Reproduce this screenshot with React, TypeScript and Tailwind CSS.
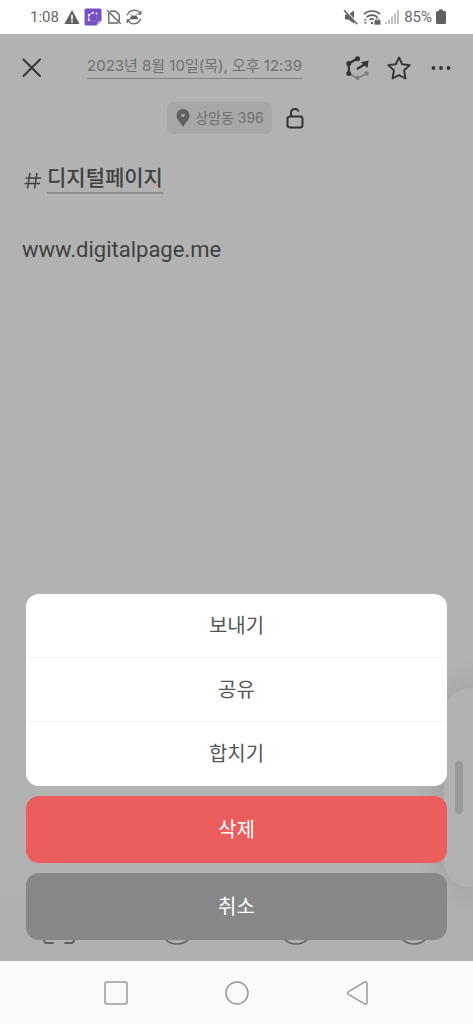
import { useState } from "react";

const actions = ["보내기", "공유", "합치기"];

function StatusBar() {
  return (
    <div className="flex h-[34px] items-center justify-between bg-white pl-[30px] pr-[27px] text-[#666]">
      <div className="flex items-center gap-1">
        <span className="text-[15px] leading-5">1:08</span>
        <svg className="ml-px h-4 w-4" viewBox="0 0 16 16">
          <path d="M8 1 15.6 15H.4z" fill="#606060" />
          <path d="M8 5.8v4.6M8 11.6v1.8" stroke="#fff" strokeWidth="1.7" />
        </svg>
        <svg className="h-[18px] w-[18px]" viewBox="0 0 18 18">
          <path d="M2 .5h14q1.5 0 1.5 1.5v10.5l-5 5H2Q.5 17.5 .5 16V2Q.5 .5 2 .5z" fill="#7651c4" />
          <path d="m17.5 12.5-5 5 .8-3.500q.2-.8 1-.9z" fill="#a98be0" />
          <path d="M9 4.700 4.800 7v5" fill="none" stroke="#fff" strokeWidth=".8" />
          <path d="m4.800 12 3.800 2 4-2.200V8" fill="none" stroke="#9173d4" strokeWidth=".7" />
          <circle cx="9" cy="4.700" r="1" fill="#fff" />
          <circle cx="4.800" cy="7" r="1.100" fill="#fff" />
          <circle cx="4.800" cy="12" r="1.100" fill="#fff" />
          <circle cx="12.500" cy="5.500" r=".9" fill="#fff" />
        </svg>
        <svg className="h-4 w-4" viewBox="0 0 16 16" fill="none" stroke="#666" strokeWidth="1.400">
          <path d="M4 2.200h5.500l3.700 3.600V13M2.800 4v10h9.400M1.200 1.200l13.500 13.500" />
        </svg>
        <svg className="h-4 w-4" viewBox="0 0 16 16" fill="none" stroke="#666" strokeWidth="1.300">
          <path d="M1.300 6.200a7 7 0 0 1 12.800-1.400M14.700 9.800A7 7 0 0 1 1.900 11.200M14.700 2v3.200h-3M1.300 14v-3.200h3" />
          <path d="M4 10.200a4 3.700 0 0 1 8 0z" fill="#606060" stroke="none" />
          <path d="m5 5.200 1.300 1.800M11 5.200 9.700 7" strokeWidth=".9" />
        </svg>
      </div>
      <div className="flex items-center gap-1">
        <svg className="h-4 w-4" viewBox="0 0 16 16">
          <path d="M2 5.500h3.300L11 1.500v13l-5.700-4H2z" fill="#606060" />
          <path d="m1.500 .5 13.500 15" stroke="#fff" strokeWidth="2" />
          <path d="m1 1.200 13.300 14" stroke="#606060" strokeWidth="1.500" />
        </svg>
        <svg className="h-4 w-[18px]" viewBox="0 0 18 16" fill="none" stroke="#606060" strokeWidth="1.600">
          <path d="M.8 5.200a12 12 0 0 1 16.400 0M3.600 8.200a8 8 0 0 1 10.800 0M6.300 11a4.500 4.500 0 0 1 4.500-.8" />
          <circle cx="9" cy="14" r="1.300" fill="#606060" stroke="none" />
          <path d="m.8 11.600 1.500-2 1.500 2zM.8 13l1.500 2 1.500-2z" fill="#606060" stroke="none" />
          <path d="M11.500 11.200h6v4.500h-6z" fill="#606060" stroke="none" />
          <path d="M13 11.500v-1a1.500 1.500 0 0 1 3 0v1" strokeWidth="1" />
        </svg>
        <svg className="h-4 w-[15px]" viewBox="0 0 15 16" fill="#c2c2c2">
          <path d="M0 13h2v2H0zM3 10.500h2V15H3zM6 7.500h2V15H6zM9 4.500h2V15H9zM12 1h2v14h-2z" />
        </svg>
        <span className="text-[15px] leading-5">85%</span>
        <svg className="h-4 w-[10px]" viewBox="0 0 10 16" fill="#606060">
          <path d="M3 .5h4v1.500h1.500Q10 2 10 3.500v10Q10 15 8.500 15h-7Q0 15 0 13.500v-10Q0 2 1.500 2H3z" />
        </svg>
      </div>
    </div>
  );
}

function NoteHeader() {
  return (
    <header>
      <div className="flex h-[68px] items-center justify-between px-5">
        <button aria-label="닫기">
          <svg className="h-6 w-6" viewBox="0 0 24 24" fill="none" stroke="#333" strokeWidth="2" strokeLinecap="round">
            <path d="m3.500 3.500 16.500 16.500M20 3.500 3.500 20" />
          </svg>
        </button>
        <button className="mb-1 border-b border-[#858585] font-['Inter','Noto_Sans_CJK_KR',sans-serif] text-[15px] leading-6 text-[#707070]">
          2023년 8월 10일(목), 오후 12:39
        </button>
        <div className="flex items-center gap-[18px]">
          <button aria-label="연결">
            <svg className="h-6 w-6" viewBox="0 0 24 24" fill="none">
              <path d="m3.800 17.500 8.700 5 9-5" stroke="#808080" strokeWidth="1.800" />
              <circle cx="12.500" cy="21.700" r="2.300" fill="#808080" />
              <circle cx="21.500" cy="17.500" r="2.300" fill="#808080" />
              <path d="M12.500 2.500 3.800 7.500v10M12 13l8-4.700" stroke="#333" strokeWidth="2.200" />
              <path d="m15.800 6.300 7.800-1.800-1.200 7.500z" fill="#333" />
              <circle cx="12.500" cy="2.700" r="2.500" fill="#333" />
              <circle cx="3.800" cy="7.500" r="2.500" fill="#333" />
              <circle cx="3.800" cy="17.500" r="2.500" fill="#333" />
            </svg>
          </button>
          <button aria-label="즐겨찾기">
            <svg className="h-6 w-6" viewBox="0 0 24 24" fill="none" stroke="#333" strokeWidth="1.900" strokeLinejoin="round">
              <path d="m12 1.500 3.100 6.700 7.700 .9-5.700 5.100 1.400 8.300-6.500-3.300-6.500 3.300 1.400-8.300-5.700-5.100 7.700-.9z" />
            </svg>
          </button>
          <button aria-label="더보기">
            <svg className="h-6 w-6" viewBox="0 0 24 24" fill="#333">
              <circle cx="4.500" cy="12" r="1.900" />
              <circle cx="12" cy="12" r="1.900" />
              <circle cx="19.500" cy="12" r="1.900" />
            </svg>
          </button>
        </div>
      </div>
      <div className="flex items-center justify-center gap-3">
        <button className="flex h-8 items-center gap-1 rounded-md bg-[#a7a7a7] px-2 font-['Inter','Noto_Sans_CJK_KR',sans-serif] text-sm text-[#707070]">
          <svg className="h-5 w-4" viewBox="0 0 16 20">
            <path d="M8 1a6.600 6.600 0 0 0-6.600 6.600C1.400 12 5.500 14 8 19c2.500-5 6.600-7 6.600-11.400A6.600 6.600 0 0 0 8 1z" fill="#606060" />
            <circle cx="8" cy="7.500" r="1.800" fill="#a7a7a7" />
          </svg>
          상암동 396
        </button>
        <button aria-label="잠금">
          <svg className="h-[22px] w-[22px]" viewBox="0 0 22 22" fill="none" stroke="#333" strokeWidth="2" strokeLinecap="round">
            <rect x="3.500" y="9.500" width="15" height="11" rx="2.500" />
            <path d="M7 9V5.500A3.500 3.500 0 0 1 10.500 2h1a3 3 0 0 1 2.700 1.800" />
          </svg>
        </button>
      </div>
    </header>
  );
}

function ToolBar() {
  return (
    <div className="flex h-[66px] items-start justify-between bg-[#b0b0b0] px-[41px] pt-3.5">
      <button aria-label="스캔">
        <svg className="h-9 w-9" viewBox="0 0 36 36" fill="none" stroke="#606060" strokeWidth="1.800" strokeLinecap="round">
          <path d="M12 3H6Q3 3 3 6v6M24 3h6q3 0 3 3v6M12 34H6q-3 0-3-3v-6M24 34h6q3 0 3-3v-6" />
        </svg>
      </button>
      {["음성", "사진", "추가"].map((label) => (
        <button key={label} aria-label={label}>
          <svg className="h-9 w-9" viewBox="0 0 36 36" fill="none" stroke="#606060" strokeWidth="1.600">
            <circle cx="18" cy="18" r="17" />
          </svg>
        </button>
      ))}
    </div>
  );
}

function ActionSheet({ onClose }: { onClose: () => void }) {
  return (
    <div className="absolute inset-x-0 bottom-0 flex flex-col gap-2.5 px-[26px] pb-[21px] text-xl">
      <div className="divide-y divide-[#f5f5f5] overflow-hidden rounded-[13px] bg-white text-[#555]">
        {actions.map((label) => (
          <button key={label} className="block h-16 w-full">
            {label}
          </button>
        ))}
      </div>
      <button className="h-[67px] rounded-[13px] bg-[#ec5d5d] text-white">삭제</button>
      <button className="h-[67px] rounded-[13px] bg-[#878787] text-white" onClick={onClose}>
        취소
      </button>
    </div>
  );
}

function NavBar() {
  return (
    <nav className="flex h-[63px] items-center justify-center gap-[97px] bg-[#fafafa]">
      <button aria-label="최근 앱">
        <svg className="h-6 w-6" viewBox="0 0 24 24" fill="none" stroke="#999" strokeWidth="1.500">
          <rect x="1" y="1" width="22" height="22" rx="2" />
        </svg>
      </button>
      <button aria-label="홈">
        <svg className="h-6 w-6" viewBox="0 0 24 24" fill="none" stroke="#999" strokeWidth="1.500">
          <circle cx="12" cy="12" r="11" />
        </svg>
      </button>
      <button aria-label="뒤로">
        <svg className="h-6 w-6" viewBox="0 0 24 24" fill="none" stroke="#999" strokeWidth="1.500">
          <path d="M18.500 1.200 2.500 10.600q-2 1.400 0 2.800l16 9.400q2.500 .9 2.500-1.600V2.800q0-2.500-2.500-1.600z" />
        </svg>
      </button>
    </nav>
  );
}

export default function App() {
  const [sheetOpen, setSheetOpen] = useState(true);

  return (
    <div className="flex min-h-screen flex-col font-['Roboto','Noto_Sans_CJK_KR',sans-serif]">
      <StatusBar />
      <main className="relative flex flex-1 flex-col overflow-hidden bg-[#b2b2b2]">
        <NoteHeader />
        <div className="flex-1 px-[22px] pt-[30px] text-[#404040]">
          <h1 className="flex items-center gap-[5px] text-[21px] leading-8">
            <svg className="mt-1 h-5 w-5" viewBox="0 0 20 20" fill="none" stroke="#404040" strokeWidth="1.500">
              <path d="M8 2 5.500 17.500M15 2l-2.500 15.500M3.500 7h15.500M2.500 12.500H18" />
            </svg>
            <span className="border-b-2 border-[#8c8c8c] font-medium leading-7">디지털페이지</span>
          </h1>
          <p className="mt-10 text-[22px] leading-8">www.digitalpage.me</p>
        </div>
        <ToolBar />
        {/* edge panel handle */}
        <div className="absolute -right-6 bottom-[74px] flex h-[199px] w-[53px] items-center rounded-[26px] bg-[#b2b2b2] pl-[11px] shadow-[0_0_32px_rgba(0,0,0,0.15)]">
          <div className="h-[53px] w-2 rounded-full bg-[#999]" />
        </div>
        {sheetOpen && <ActionSheet onClose={() => setSheetOpen(false)} />}
      </main>
      <NavBar />
    </div>
  );
}
